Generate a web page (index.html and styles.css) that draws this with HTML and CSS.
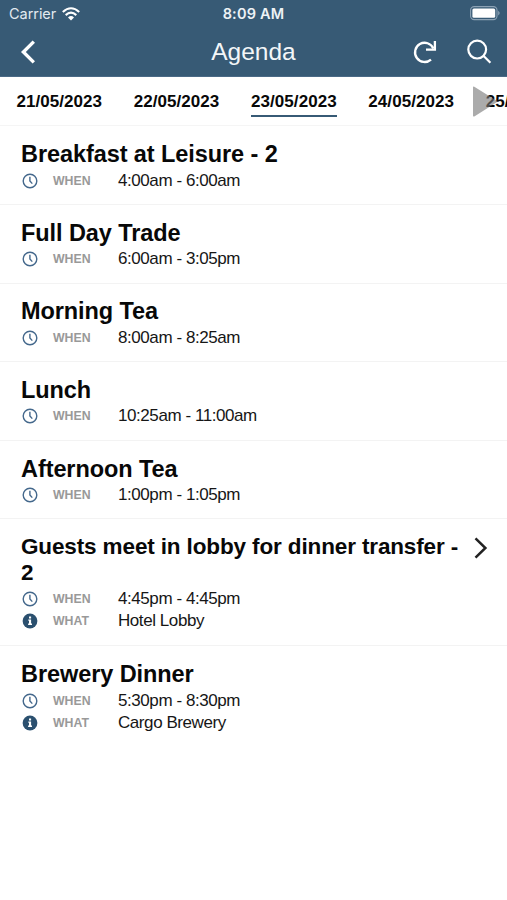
FILE: index.html
```html
<!DOCTYPE html>
<html lang="en">
<head>
<meta charset="utf-8">
<title>Agenda</title>
<link rel="stylesheet" href="styles.css">
</head>
<body>
<svg class="defs" aria-hidden="true">
  <symbol id="clock" viewBox="0 0 16 16"><circle cx="8" cy="8" r="6.8" fill="none" stroke="#44688c" stroke-width="1.4"/><path d="M7.9 3.7V8l2.4 2.6" fill="none" stroke="#44688c" stroke-width="1.4"/></symbol>
  <symbol id="info" viewBox="0 0 16 16"><circle cx="8" cy="8" r="7.4" fill="#2b506f"/><path d="M6.3 6.4h2.8v4.2h.9v1.3H6.1v-1.3H7V7.7h-.7zM7 3.6h2.1v1.8H7z" fill="#fff"/></symbol>
</svg>
<header class="header">
  <div class="status">
    <div class="carrier"><span>Carrier</span>
      <svg class="wifi" viewBox="0 0 18 14"><g fill="none" stroke="#fff" stroke-width="2.1"><path d="M.8 5Q9-2.5 17.2 5"/><path d="M3.7 8.1Q9 3.3 14.3 8.1"/></g><path d="M6 10.4Q9 7.8 12 10.4L9 13.6z" fill="#fff"/></svg>
    </div>
    <div class="time">8:09 AM</div>
    <svg class="battery" viewBox="0 0 31 15"><rect x=".6" y=".6" width="26.4" height="13" rx="3.6" fill="none" stroke="#8ca2b5" stroke-width="1.1"/><rect x="2.4" y="2.4" width="22.8" height="9.4" rx="1.5" fill="#fff"/><path d="M28.2 4.8q3 2.3 0 4.6z" fill="#8ca2b5"/></svg>
  </div>
  <div class="nav">
    <svg class="back" viewBox="0 0 16 24"><path d="M13.8 1.6L3.4 12l10.4 10.4" fill="none" stroke="#fff" stroke-width="3.4"/></svg>
    <h1>Agenda</h1>
    <div class="actions">
      <svg class="refresh" viewBox="0 0 24 24"><g fill="none" stroke="#fff" stroke-width="2.3"><path d="M18 19.6A9.6 9.6 0 1 1 20.4 8.4"/><path d="M21.9 1v8.7H13"/></g></svg>
      <svg class="search" viewBox="0 0 25 25"><g fill="none" stroke="#fff" stroke-width="2.2"><circle cx="10.2" cy="10.6" r="8.9"/><path d="M16.4 16.8l7 7"/></g></svg>
    </div>
  </div>
</header>
<nav class="dates">
  <span>21/05/2023</span><span>22/05/2023</span><span class="active">23/05/2023</span><span>24/05/2023</span><span>25/05/2023</span>
  <svg class="next" viewBox="0 0 26 32"><path d="M1 1.3Q1 0 2.3.7L24.4 14.5Q26 15.5 24.4 16.5L2.3 30.4Q1 31 1 29.8z" fill="#777" fill-opacity=".62"/></svg>
</nav>
<main>
  <article class="item"><h2>Breakfast at Leisure - 2</h2>
    <div class="row"><svg><use href="#clock"/></svg><b>WHEN</b><span>4:00am - 6:00am</span></div></article>
  <article class="item"><h2>Full Day Trade</h2>
    <div class="row"><svg><use href="#clock"/></svg><b>WHEN</b><span>6:00am - 3:05pm</span></div></article>
  <article class="item"><h2>Morning Tea</h2>
    <div class="row"><svg><use href="#clock"/></svg><b>WHEN</b><span>8:00am - 8:25am</span></div></article>
  <article class="item"><h2>Lunch</h2>
    <div class="row"><svg><use href="#clock"/></svg><b>WHEN</b><span>10:25am - 11:00am</span></div></article>
  <article class="item"><h2>Afternoon Tea</h2>
    <div class="row"><svg><use href="#clock"/></svg><b>WHEN</b><span>1:00pm - 1:05pm</span></div></article>
  <article class="item"><div class="heading"><h2>Guests meet in lobby for dinner transfer - 2</h2>
    <svg class="chevron" viewBox="0 0 14 22"><path d="M1.5 1.3L11.4 11 1.5 20.7" fill="none" stroke="#222" stroke-width="2.5"/></svg></div>
    <div class="row"><svg><use href="#clock"/></svg><b>WHEN</b><span>4:45pm - 4:45pm</span></div>
    <div class="row"><svg><use href="#info"/></svg><b>WHAT</b><span>Hotel Lobby</span></div></article>
  <article class="item"><h2>Brewery Dinner</h2>
    <div class="row"><svg><use href="#clock"/></svg><b>WHEN</b><span>5:30pm - 8:30pm</span></div>
    <div class="row"><svg><use href="#info"/></svg><b>WHAT</b><span>Cargo Brewery</span></div></article>
</main>
</body>
</html>
```
FILE: styles.css
```css
* { box-sizing: border-box; }
body { margin: 0; height: 900px; overflow: hidden; background: #fff; color: #080808; font-family: "Liberation Sans", Arial, sans-serif; }
svg { display: block; flex: none; }
.defs { display: none; }
h1, h2 { margin: 0; }
.header { height: 77px; background: #375a75; border-bottom: 1px solid #4b6a86; color: #fff; }
.status { height: 27px; display: grid; grid-template-columns: 1fr auto 1fr; align-items: center; padding: 0 6px 0 9px; font-family: Inter, sans-serif; }
.carrier { display: flex; align-items: center; gap: 6px; font-size: 14.5px; letter-spacing: -.05px; color: #e2eaf0; }
.wifi { width: 18px; height: 14px; }
.time { font-size: 14.5px; font-weight: 600; letter-spacing: .2px; margin-left: -3px; color: #edf2f5; }
.battery { width: 31px; height: 15px; justify-self: end; }
.nav { height: 49px; display: grid; grid-template-columns: 1fr auto 1fr; align-items: center; padding: 0 15px 0 20px; }
.nav h1 { font-size: 24.5px; font-weight: 400; letter-spacing: 0; line-height: 49px; margin-left: -5px; color: #f3f6f8; }
.back { width: 16px; height: 24px; }
.actions { display: flex; justify-content: flex-end; align-items: center; gap: 30px; }
.refresh { width: 24px; height: 24px; }
.search { width: 25px; height: 25px; }
.dates { position: relative; height: 49.4px; padding: 10px 0 0 16.5px; display: flex; align-items: flex-start; gap: 31.7px; overflow: hidden; border-bottom: 1px solid #f5f5f5; font-size: 17px; font-weight: 700; letter-spacing: .05px; white-space: nowrap; }
.dates span { flex: none; height: 30px; line-height: 29px; border-bottom: 2px solid transparent; }
.dates .active { border-color: #375a75; }
.next { position: absolute; left: 472px; top: 9px; width: 26px; height: 32px; }
.item { padding: 14.8px 21px 12.2px; border-bottom: 1px solid #f3f3f3; }
.item:last-child { border: 0; }
h2 { font-size: 23.5px; line-height: 26.4px; font-weight: 700; letter-spacing: -.08px; margin-bottom: 2.1px; }
.heading { display: flex; justify-content: space-between; align-items: flex-start; margin-right: -2px; margin-bottom: 1.2px; }
.heading h2 { width: 447px; margin-bottom: 0; font-size: 22.5px; letter-spacing: -.13px; }
.heading ~ .row:last-child { margin-bottom: .9px; }
.chevron { width: 14px; height: 22px; margin-top: 3px; }
.row { height: 22.1px; display: grid; grid-template-columns: 32px 65px 1fr; align-items: center; }
.row svg { width: 16px; height: 16px; margin-left: 1px; }
.row b { font-size: 12.3px; color: #999; }
.row span { font-size: 17px; line-height: 22px; letter-spacing: -.43px; color: #161616; }
```
